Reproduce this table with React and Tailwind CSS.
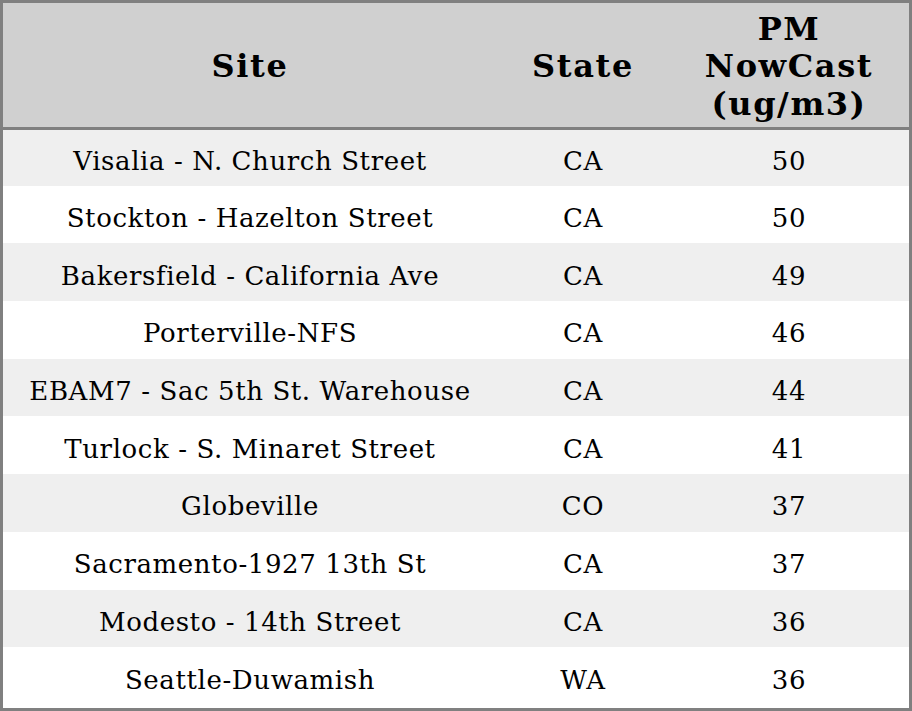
import React from "react";

const rows = [
  { site: "Visalia - N. Church Street", state: "CA", pm: 50 },
  { site: "Stockton - Hazelton Street", state: "CA", pm: 50 },
  { site: "Bakersfield - California Ave", state: "CA", pm: 49 },
  { site: "Porterville-NFS", state: "CA", pm: 46 },
  { site: "EBAM7 - Sac 5th St. Warehouse", state: "CA", pm: 44 },
  { site: "Turlock - S. Minaret Street", state: "CA", pm: 41 },
  { site: "Globeville", state: "CO", pm: 37 },
  { site: "Sacramento-1927 13th St", state: "CA", pm: 37 },
  { site: "Modesto - 14th Street", state: "CA", pm: 36 },
  { site: "Seattle-Duwamish", state: "WA", pm: 36 },
];

const App = () => {
  return (
    <div className="w-[912px] h-[711px] bg-white font-['DejaVu_Serif',serif] text-black">
      <div className="border-[3px] border-[#808080] h-full">
        <table className="w-full table-fixed border-collapse">
          <colgroup>
            <col className="w-[494px]" />
            <col className="w-[172px]" />
            <col className="w-[240px]" />
          </colgroup>
          <thead>
            <tr className="h-[125px] bg-[#d0d0d0] border-b-[3px] border-[#808080] text-[32px] font-bold leading-[37.5px] tracking-[1.6px]">
              <th className="text-center pt-1">Site</th>
              <th className="text-center pt-1">State</th>
              <th className="text-center pt-1">
                PM
                <br />
                NowCast
                <br />
                (ug/m3)
              </th>
            </tr>
          </thead>
          <tbody>
            {rows.map((r, i) => (
              <tr
                key={r.site}
                className={
                  "h-[57.7px] text-[26px] tracking-[0.6px] " +
                  (i % 2 === 0 ? "bg-[#efefef]" : "bg-white")
                }
              >
                <td className="text-center pt-2">{r.site}</td>
                <td className="text-center pt-2">{r.state}</td>
                <td className="text-center pt-2">{r.pm}</td>
              </tr>
            ))}
          </tbody>
        </table>
      </div>
    </div>
  );
};

export default App;
